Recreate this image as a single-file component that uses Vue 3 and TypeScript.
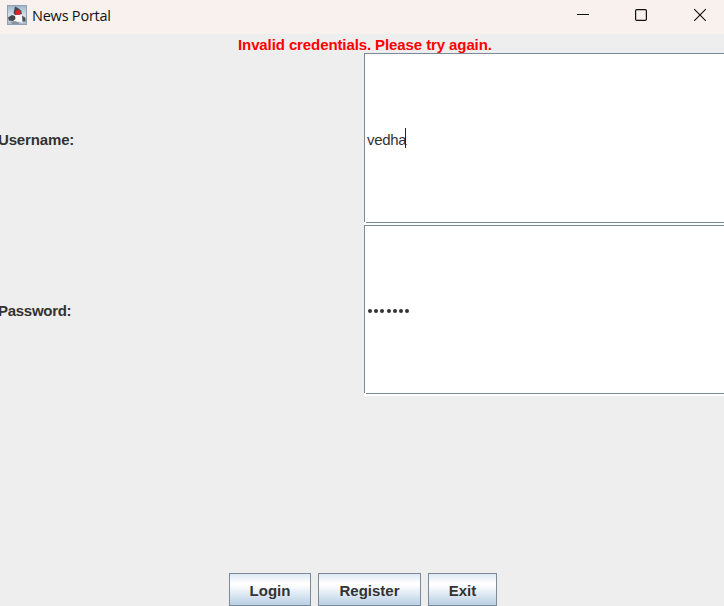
<script setup lang="ts">
import { ref } from 'vue'

const username = ref('vedha')
const passwordLength = ref(7)
const message = ref('Invalid credentials. Please try again.')
</script>

<template>
  <div class="window">
    <header class="titlebar">
      <svg class="app-icon" width="20" height="20" viewBox="0 0 20 20">
        <defs>
          <linearGradient id="iconBg" x1="0" y1="0" x2="0" y2="1">
            <stop offset="0" stop-color="#9fb5c8" />
            <stop offset="0.5" stop-color="#d5e0e9" />
            <stop offset="1" stop-color="#a4b8c9" />
          </linearGradient>
        </defs>
        <rect x="0.5" y="0.5" width="19" height="19" fill="url(#iconBg)" stroke="#8ba1b6" />
        <path d="M8 9 L14 8 L15.5 11 L15.5 18 L12 16.5 L9 18.5 L6 15 Z" fill="#f5f6f7" />
        <path d="M8 1.5 L11 3 L14 5.5 L15 9 L13 9.5 L8 10 L6.5 8 Z" fill="#46484f" />
        <path d="M1 12.5 L5 10 L8 11 L8.5 14 L6 16 L2 15.5 Z" fill="#45474d" />
        <path d="M15 10.5 L18.5 13 L18.5 16.5 L15.5 16.5 Z" fill="#50545b" />
        <path d="M4 17 L8 16 L12 17.5 L12 19 L5 19 Z" fill="#8a939c" />
        <circle cx="11" cy="7.5" r="2.5" fill="#e02129" />
      </svg>
      <span class="title">News Portal</span>
      <svg class="controls" width="132" height="14" viewBox="0 0 132 14" fill="none" stroke="#111">
        <path d="M1 7.5 H13" />
        <rect x="59.6" y="2.6" width="10.8" height="10.8" rx="1.2" stroke-width="1.2" />
        <path d="M118.2 2.2 L129.8 13.8 M129.8 2.2 L118.2 13.8" stroke-width="1.15" />
      </svg>
    </header>
    <main class="content">
      <p class="message"><span>{{ message }}</span></p>
      <div class="form">
        <label class="label user">Username:</label>
        <div class="field"><span class="value">{{ username }}</span><i class="caret"></i></div>
        <label class="label pass">Password:</label>
        <div class="field">
          <span class="dots"><i v-for="n in passwordLength" :key="n" class="dot"></i></span>
        </div>
      </div>
      <div class="actions">
        <button class="login">Login</button>
        <button class="register">Register</button>
        <button class="exit">Exit</button>
      </div>
    </main>
  </div>
</template>

<style>
body {
  margin: 0;
  overflow: hidden;
}
</style>

<style scoped>
.window {
  width: 724px;
  height: 606px;
  display: flex;
  flex-direction: column;
  overflow: hidden;
  background: #eee;
  color: #333;
  font: 15px "Liberation Sans", Arial, sans-serif;
}
.titlebar {
  height: 34px;
  flex: none;
  display: flex;
  box-sizing: border-box;
  padding: 5px 16px 0 7px;
  background: #f9f1ed;
}
.app-icon {
  flex: none;
}
.title {
  margin-left: 5px;
  font: 14.5px/22px "Open Sans", sans-serif;
  letter-spacing: -0.22px;
  color: #111;
}
.controls {
  margin: 2px 0 0 auto;
}
.content {
  flex: 1;
  display: flex;
  flex-direction: column;
}
.message {
  margin: 0;
  height: 19px;
  padding-left: 238px;
  font-weight: bold;
  line-height: 22px;
  letter-spacing: -0.1px;
  color: #f00;
  white-space: nowrap;
}
.form {
  display: grid;
  grid-template-columns: 364px 360px;
  grid-template-rows: 172px 171px;
}
.label {
  margin-left: -2px;
  font-weight: bold;
  line-height: 174px;
}
.user {
  letter-spacing: -0.15px;
}
.pass {
  line-height: 172px;
  letter-spacing: -0.28px;
}
.field {
  display: flex;
  align-items: center;
  box-sizing: border-box;
  margin-right: -4px;
  padding: 0 0 2px 3px;
  background:
    linear-gradient(#7a8a99, #7a8a99) 0 0 / 100% 1px no-repeat,
    linear-gradient(#7a8a99, #7a8a99) 0 0 / 1px calc(100% - 3px) no-repeat,
    linear-gradient(#7a8a99, #7a8a99) 2px calc(100% - 2px) / 100% 1px no-repeat,
    #fff;
}
.value {
  line-height: 20px;
  padding-top: 3px;
  letter-spacing: -0.35px;
}
.caret {
  width: 1px;
  height: 20px;
  margin-left: -1px;
  margin-top: -1px;
  background: #222;
}
.dots {
  display: flex;
  gap: 2.2px;
  padding: 2px 0 0 1px;
}
.dot {
  width: 4px;
  height: 4px;
  border-radius: 50%;
  background: #333;
}
.actions {
  display: flex;
  gap: 7px;
  margin-top: auto;
  padding-left: 229px;
}
.actions button {
  height: 33px;
  box-sizing: border-box;
  margin: 0;
  padding: 2px 0 0;
  border: 1px solid #7a8a99;
  border-radius: 0;
  background: linear-gradient(#dde8f3 0%, #fff 30%, #fff 36%, #b8cfe5 100%);
  color: #333;
  font: bold 15px "Liberation Sans", Arial, sans-serif;
}
.actions .login {
  width: 82px;
}
.actions .register {
  width: 103px;
}
.actions .exit {
  width: 69px;
}
</style>
